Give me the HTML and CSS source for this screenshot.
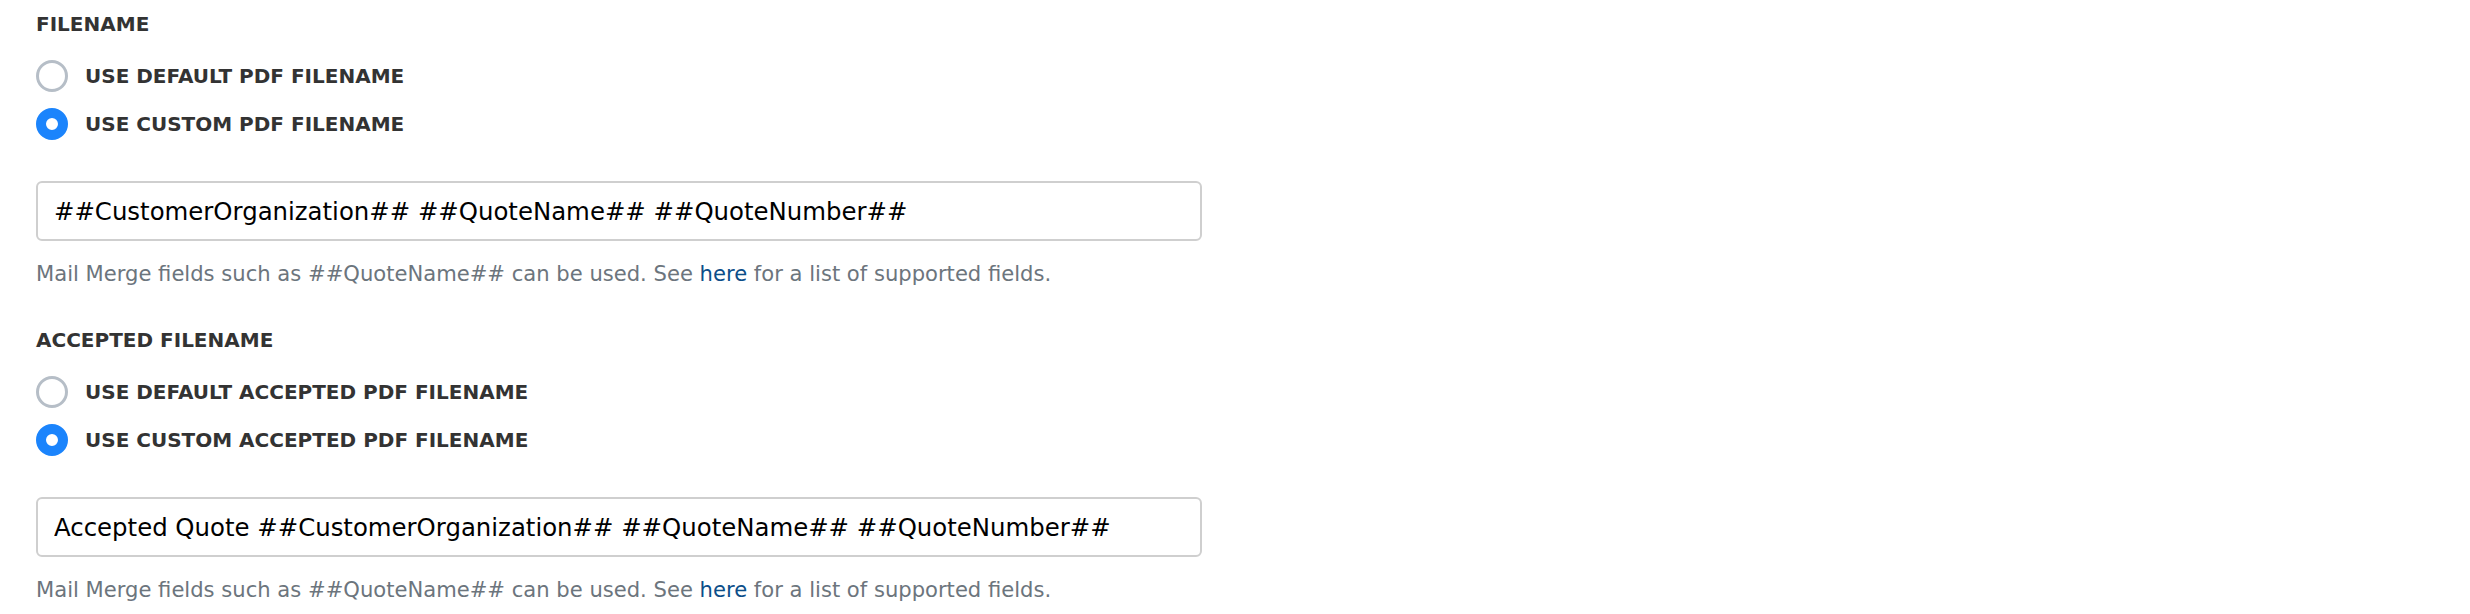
FILE: index.html
```html
<!DOCTYPE html>
<html lang="en">
<head>
<meta charset="utf-8">
<title>Filename settings</title>
<link rel="stylesheet" href="styles.css">
</head>
<body>
<main class="settings">
  <section class="field-group">
    <h3 class="group-title">FILENAME</h3>
    <div class="radio-list">
      <label class="radio-row">
        <input class="radio" type="radio" name="pdf-name">
        <span class="radio-label">USE DEFAULT PDF FILENAME</span>
      </label>
      <label class="radio-row">
        <input class="radio" type="radio" name="pdf-name" checked>
        <span class="radio-label">USE CUSTOM PDF FILENAME</span>
      </label>
    </div>
    <input class="text-input" type="text" value="##CustomerOrganization## ##QuoteName## ##QuoteNumber##">
    <p class="help">Mail Merge fields such as ##QuoteName## can be used. See <a class="help-link" href="#">here</a> for a list of supported fields.</p>
  </section>
  <section class="field-group">
    <h3 class="group-title">ACCEPTED FILENAME</h3>
    <div class="radio-list">
      <label class="radio-row">
        <input class="radio" type="radio" name="accepted-name">
        <span class="radio-label">USE DEFAULT ACCEPTED PDF FILENAME</span>
      </label>
      <label class="radio-row">
        <input class="radio" type="radio" name="accepted-name" checked>
        <span class="radio-label">USE CUSTOM ACCEPTED PDF FILENAME</span>
      </label>
    </div>
    <input class="text-input" type="text" value="Accepted Quote ##CustomerOrganization## ##QuoteName## ##QuoteNumber##">
    <p class="help">Mail Merge fields such as ##QuoteName## can be used. See <a class="help-link" href="#">here</a> for a list of supported fields.</p>
  </section>
</main>
</body>
</html>
```
FILE: styles.css
```css
* {
  box-sizing: border-box;
}

html, body {
  margin: 0;
  padding: 0;
  background: #ffffff;
}

body {
  font-family: "DejaVu Sans", "Liberation Sans", sans-serif;
  color: #333333;
}

.settings {
  display: flex;
  flex-direction: column;
  gap: 40px;
  padding: 12px 0 0 36px;
}

.field-group {
  display: flex;
  flex-direction: column;
  align-items: flex-start;
}

.group-title {
  margin: 0;
  font-size: 20px;
  line-height: 24px;
  font-weight: bold;
  color: #333333;
}

.radio-list {
  display: flex;
  flex-direction: column;
  margin-top: 16px;
}

.radio-row {
  display: flex;
  align-items: center;
  gap: 17px;
  height: 48px;
  cursor: pointer;
}

.radio {
  appearance: none;
  -webkit-appearance: none;
  margin: 0;
  width: 32px;
  height: 32px;
  border-radius: 50%;
  border: 3px solid #b6bec7;
  background: #ffffff;
  flex: none;
}

.radio:checked {
  border: 10px solid #1b84fc;
  background: #ffffff;
}

.radio-label {
  font-size: 20px;
  line-height: 24px;
  font-weight: bold;
  color: #333333;
}

.text-input {
  margin-top: 33px;
  width: 1166px;
  height: 60px;
  padding: 0 16px;
  border: 2px solid #cfcfcf;
  border-radius: 6px;
  font-family: "DejaVu Sans", "Liberation Sans", sans-serif;
  font-size: 24.4px;
  color: #000000;
  background: #ffffff;
  outline: none;
}

.help {
  margin: 19px 0 0;
  font-size: 21.1px;
  line-height: 28px;
  color: #6c757d;
}

.help-link {
  color: #0b4e89;
  text-decoration: none;
}
```
